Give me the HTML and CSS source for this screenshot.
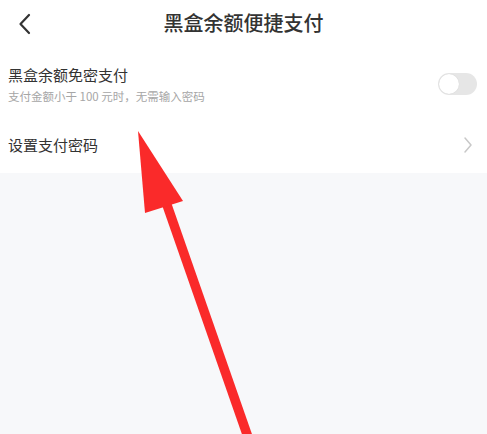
FILE: index.html
```html
<!DOCTYPE html>
<html lang="zh-CN">
<head>
<meta charset="utf-8">
<title>黑盒余额便捷支付</title>
<link rel="stylesheet" href="styles.css">
</head>
<body>
<div class="page">
  <header class="nav">
    <span class="back">
      <svg width="14" height="22" viewBox="0 0 14 22"><path d="M11 2 L2.5 11 L11 20" fill="none" stroke="#333" stroke-width="2.2" stroke-linecap="round" stroke-linejoin="round"/></svg>
    </span>
    <h1 class="title">黑盒余额便捷支付</h1>
  </header>
  <section class="list">
    <div class="row row-switch">
      <div class="texts">
        <div class="label">黑盒余额免密支付</div>
        <div class="hint">支付金额小于 100 元时，无需输入密码</div>
      </div>
      <span class="switch"><span class="knob"></span></span>
    </div>
    <div class="row row-link">
      <div class="label">设置支付密码</div>
      <svg class="chev" width="10" height="18" viewBox="0 0 10 18"><path d="M2 2 L8 9 L2 16" fill="none" stroke="#c8c8c8" stroke-width="1.5" stroke-linecap="round" stroke-linejoin="round"/></svg>
    </div>
  </section>
  <div class="rest"></div>
  <svg class="arrow" width="487" height="434" viewBox="0 0 487 434">
    <line x1="167" y1="205" x2="249" y2="440" stroke="#fa2a2a" stroke-width="9.5"/>
    <polygon points="138,131 145,213 183,201" fill="#fa2a2a"/>
  </svg>
</div>
</body>
</html>
```
FILE: styles.css
```css
* { box-sizing: border-box; margin: 0; padding: 0; }
html, body { width: 487px; height: 434px; overflow: hidden; }
body {
  font-family: "Noto Sans CJK SC", "Noto Sans", sans-serif;
  background: #f7f8fa;
  color: #333;
}
.page { position: relative; width: 487px; height: 434px; display: flex; flex-direction: column; }
.nav {
  height: 48px;
  background: #fff;
  display: flex;
  align-items: center;
  justify-content: center;
  position: relative;
}
.back { position: absolute; left: 18px; top: 13px; display: flex; }
.title { font-size: 20px; font-weight: 500; color: #333; letter-spacing: 0; line-height: 1; margin-top: -2px; }
.list { background: #fff; }
.row {
  display: flex;
  align-items: center;
  justify-content: space-between;
  padding: 0 10px 0 8px;
}
.row-switch { height: 70px; padding-top: 2px; }
.row-link { height: 55px; padding-bottom: 2px; }
.label { font-size: 15px; color: #333; line-height: 20px; }
.hint { font-size: 11.5px; color: #a6a6a6; line-height: 14px; margin-top: 4px; }
.switch {
  width: 39px; height: 22px; border-radius: 11px;
  background: #e6e6e6;
  display: flex; align-items: center; padding: 1px;
}
.knob {
  width: 20px; height: 20px; border-radius: 50%;
  background: #fff;
  box-shadow: 0 0 1px rgba(0,0,0,0.15);
}
.chev { margin-right: 4px; }
.rest { flex: 1; background: #f7f8fa; }
.arrow { position: absolute; left: 0; top: 0; pointer-events: none; }
```
